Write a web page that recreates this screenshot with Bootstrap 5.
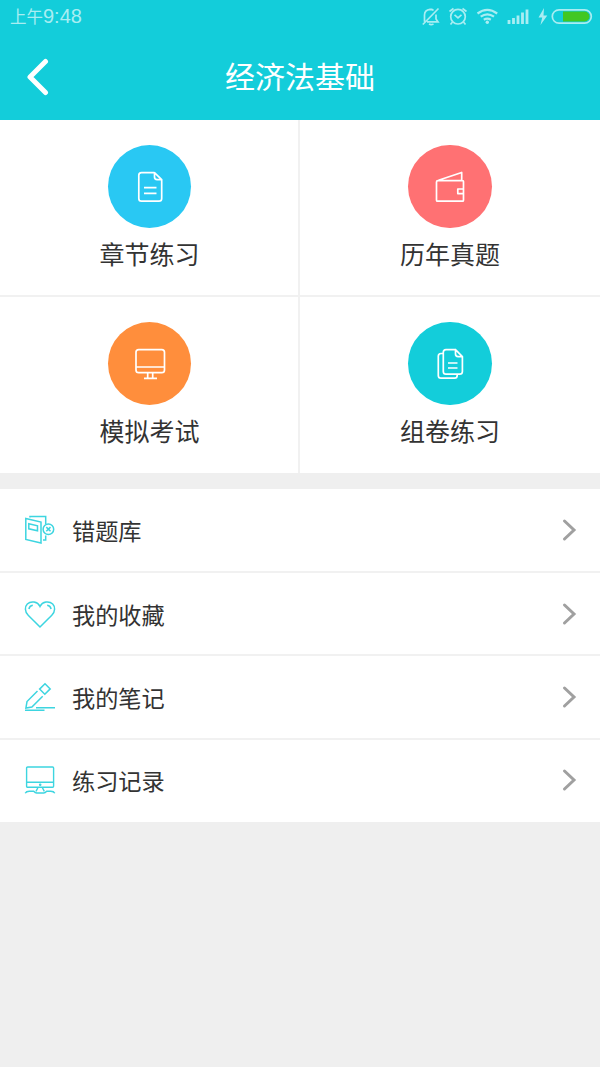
<!DOCTYPE html>
<html lang="zh-CN">
<head>
<meta charset="utf-8">
<meta name="viewport" content="width=device-width, initial-scale=1">
<title>经济法基础</title>
<link href="https://cdn.jsdelivr.net/npm/bootstrap@5.3.0/dist/css/bootstrap.min.css" rel="stylesheet">
<style>
body{background:#efefef;color:#333;font-family:"Noto Sans CJK SC",sans-serif;overflow-x:hidden}
svg{display:block;fill:none;stroke:currentColor;flex:none}
.topbar{background:#13cdda;height:120px}
.statusbar{height:34px;color:#a9edf2;padding-left:10px}
.clock{font-size:16.5px;line-height:32px}
.clock span{font-family:"Liberation Sans",sans-serif;font-size:20px}
.titlebar{height:86px}
.titlebar h1{font-size:30px;line-height:44px;padding-bottom:5px}
.back{left:25px;top:24px}
.tile{height:177px;padding-top:25px;border-bottom:2px solid #f1f1f1;background:#fff}
.tile:nth-child(odd){border-right:2px solid #f1f1f1;padding-left:1px}
.tile:nth-child(n+3){height:176px;border-bottom:0}
.disc{width:83.4px;height:83.4px;color:#fff}
.tile-name{font-size:25px;line-height:36px;margin-top:6.6px}
.sky{background:#29c8f3}.coral{background:#ff7173}.amber{background:#ff8e3c}.teal{background:#13cdda}
.menu{margin-top:16px}
.menu .list-group-item{height:83.33px;padding:0 24px;border-color:#f1f1f1;border-width:0 0 2px;color:#333;font-size:23.2px}
.menu .list-group-item:first-child{height:84px}
.menu .list-group-item:last-child{height:82.4px;border-bottom:0;padding-bottom:1px}
.menu-name{line-height:34px;margin-left:16px}
.menu-icon{color:#3dd5e0}
.arrow{color:#a0a0a0;margin-right:-2px}
</style>
</head>
<body>
<header class="topbar">
  <div class="statusbar d-flex justify-content-between">
    <div class="clock text-nowrap">上午<span>9:48</span></div>
    <svg width="190" height="34" viewBox="0 0 190 34" stroke-width="1.700" aria-hidden="true">
      <path d="M14.500 21.800V15c0-3 2.200-5.300 5.500-5.700 1.400 0 2.700.4 3.600 1.100M26 14.500V19l2 2.800H17M19 24q2 1.200 4.500 0M20 9.300h2.500M12.800 24.500L28.500 8.500"/>
      <circle cx="48" cy="16.700" r="7.300"/><path d="M44.500 14.800l3.500 3 3.500-3M39.500 11.500l4-3M56.500 11.500l-4-3M42.500 22l-2 2.500M53.500 22l2 2.500"/>
      <path stroke-width="2.200" d="M67.500 13.500Q77.300 6.200 87.200 13.500M70.700 16.700Q77.300 12 84 16.700M73.800 19.700Q77.300 17.500 80.800 19.700"/><circle cx="77.300" cy="22.300" r="1.700" fill="currentColor" stroke="none"/>
      <path stroke-width="2.800" d="M99 24v-4M103.500 24v-6M108 24v-8.500M112.500 24V12.500M117 24V9.500"/>
      <path d="M134 8l-5.500 9.500h3.700l-1.700 7.500 6.800-9.500h-3.800z" fill="currentColor" stroke="none"/>
      <rect x="142.300" y="9.800" width="39" height="13.400" rx="6.700"/><path d="M153 11.500h21.500a5 5 0 010 10H153z" fill="#42c722" stroke="none"/>
    </svg>
  </div>
  <div class="titlebar position-relative d-flex align-items-center justify-content-center text-white">
    <svg class="back position-absolute" width="26" height="40" viewBox="0 0 26 40" stroke-width="5" stroke-linecap="round" stroke-linejoin="round" aria-hidden="true"><path d="M20.500 3.500L5 19l15.500 15.500"/></svg>
    <h1 class="m-0 fw-normal">经济法基础</h1>
  </div>
</header>
<main>
  <section class="row g-0 text-center">
    <div class="tile col-6">
      <div class="disc sky rounded-circle mx-auto"><svg viewBox="0 0 83.400 83.400" stroke-width="1.700" stroke-linejoin="round" aria-hidden="true"><path d="M46.500 27.600H33.500q-2.700 0-2.700 2.700V53.500q0 2.700 2.700 2.700H51q2.700 0 2.700-2.700V34.600L46.500 27.600V32q0 2.600 2.600 2.600h4.600M36 42.600h12.500M36 48.400h12.500"/></svg></div>
      <div class="tile-name">章节练习</div>
    </div>
    <div class="tile col-6">
      <div class="disc coral rounded-circle mx-auto"><svg viewBox="0 0 83.400 83.400" stroke-width="1.700" stroke-linejoin="round" aria-hidden="true"><path d="M30.500 35.300L53.700 27.500V35.500M30 35.600H54.500q1 0 1 1V55.200q0 1-1 1H29.500q-1 0-1-1V37q0-1.400 1.500-1.400M55.500 44h-5.700v4.600h5.700"/></svg></div>
      <div class="tile-name">历年真题</div>
    </div>
    <div class="tile col-6">
      <div class="disc amber rounded-circle mx-auto"><svg viewBox="0 0 83.400 83.400" stroke-width="1.700" stroke-linejoin="round" aria-hidden="true"><rect x="28" y="27.600" width="28.500" height="23" rx="2.700"/><path d="M28 45h28.500M39.700 50.600v5.500M44.700 50.600v5.500M36 56.400h13"/></svg></div>
      <div class="tile-name">模拟考试</div>
    </div>
    <div class="tile col-6">
      <div class="disc teal rounded-circle mx-auto"><svg viewBox="0 0 83.400 83.400" stroke-width="1.700" stroke-linejoin="round" aria-hidden="true"><path d="M47.500 27.600H38q-2.700 0-2.700 2.700V49.500q0 2.700 2.700 2.700H51.700q2.700 0 2.700-2.700V34.600L47.500 27.600V32q0 2.600 2.600 2.600h4.300M40 41h9.500M40 46h9.500M35.300 31.500H33q-2.700 0-2.700 2.700V53.500q0 2.700 2.700 2.700H46.500q2.700 0 2.700-2.700v-1.300"/></svg></div>
      <div class="tile-name">组卷练习</div>
    </div>
  </section>
  <nav class="menu list-group list-group-flush">
    <a href="#" class="list-group-item d-flex align-items-center">
      <svg class="menu-icon" width="32" height="32" viewBox="0 0 32 32" stroke-width="1.500" aria-hidden="true"><path d="M1.800 4.500L17 8v21L1.800 25.500zM4.800 9.800l8.700 2v5l-8.700-2zM6 3.500V2.600h15.700V10M21.700 21.500V26H19"/><circle cx="24.400" cy="15.200" r="5.300"/><path d="M22.300 13.100l4.200 4.200M26.500 13.100l-4.200 4.200"/></svg>
      <span class="menu-name">错题库</span>
      <svg class="arrow ms-auto" width="16" height="24" viewBox="0 0 16 24" stroke-width="3" stroke-linecap="round" aria-hidden="true"><path d="M2.500 3l9.500 9-9.500 9"/></svg>
    </a>
    <a href="#" class="list-group-item d-flex align-items-center">
      <svg class="menu-icon" width="32" height="32" viewBox="0 0 32 32" stroke-width="1.500" aria-hidden="true"><path d="M16 29L4.200 17.300C.5 13.500.8 8.500 3.300 6 7 2.500 13.500 3.500 16 8.500 18.500 3.500 25 2.500 28.700 6c2.500 2.500 2.800 7.500-.9 11.300zM4.900 11q.6-3.200 3.900-3.700M27.100 11q-.6-3.200-3.900-3.700"/></svg>
      <span class="menu-name">我的收藏</span>
      <svg class="arrow ms-auto" width="16" height="24" viewBox="0 0 16 24" stroke-width="3" stroke-linecap="round" aria-hidden="true"><path d="M2.500 3l9.500 9-9.500 9"/></svg>
    </a>
    <a href="#" class="list-group-item d-flex align-items-center">
      <svg class="menu-icon" width="32" height="32" viewBox="0 0 32 32" stroke-width="1.500" aria-hidden="true"><path d="M21 2.700l5.200 5.200-5.400 5.400-5.200-5.200zM13.500 10L3 20.500 1.900 27l6-.9L18.700 15.200M12 26.700h19M1 29.300h19.500"/></svg>
      <span class="menu-name">我的笔记</span>
      <svg class="arrow ms-auto" width="16" height="24" viewBox="0 0 16 24" stroke-width="3" stroke-linecap="round" aria-hidden="true"><path d="M2.500 3l9.500 9-9.500 9"/></svg>
    </a>
    <a href="#" class="list-group-item d-flex align-items-center">
      <svg class="menu-icon" width="32" height="32" viewBox="0 0 32 32" stroke-width="1.400" aria-hidden="true"><rect x="2.600" y="3" width="27" height="20.300" rx="1"/><path d="M2.600 18.300h27M14 23.500l-2 3.800M18.300 23.500l2 3.800M1.200 29.300q1-2 4-2h4.500q1.500 1.700 3 1.700h7q1.500 0 3-1.700h4.100q3 0 4 2"/><circle cx="16.200" cy="20.800" r=".6"/></svg>
      <span class="menu-name">练习记录</span>
      <svg class="arrow ms-auto" width="16" height="24" viewBox="0 0 16 24" stroke-width="3" stroke-linecap="round" aria-hidden="true"><path d="M2.500 3l9.500 9-9.500 9"/></svg>
    </a>
  </nav>
</main>
<script src="https://cdn.jsdelivr.net/npm/bootstrap@5.3.0/dist/js/bootstrap.bundle.min.js"></script>
</body>
</html>
